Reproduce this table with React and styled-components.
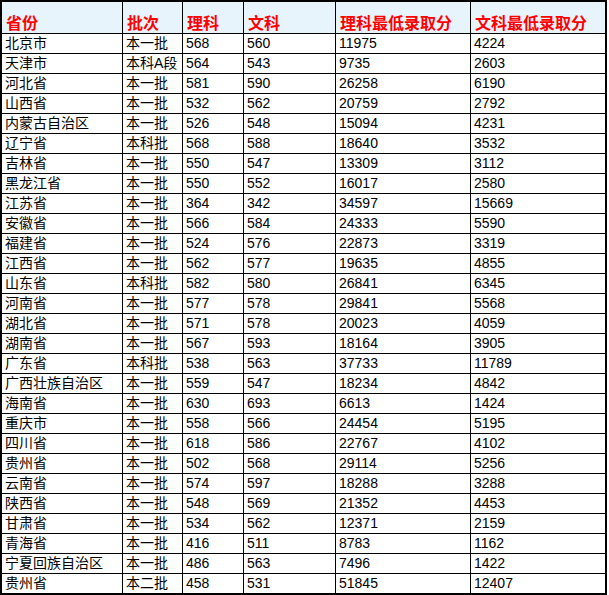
import React from "react";
import styled, { createGlobalStyle } from "styled-components";

const Global = createGlobalStyle`
  html, body { margin: 0; padding: 0; background: #ffffff; }
  body { font-family: "Liberation Sans", "Noto Sans CJK SC", sans-serif; }
`;

const Table = styled.div`
  display: grid;
  grid-template-columns: 120px 59px 60px 91px 134px 134px;
  grid-auto-rows: 19px;
  grid-template-rows: 31px;
  gap: 1px;
  width: max-content;
  background: #000000;
  border: 2px solid #000000;
`;

const HeadCell = styled.div`
  background: #e8f4fc;
  color: #ff0000;
  font-family: "Noto Sans CJK SC", sans-serif;
  font-weight: 700;
  font-size: 16px;
  line-height: 20px;
  padding: 10px 0 0 4px;
  white-space: nowrap;
  overflow: hidden;
`;

const Cell = styled.div`
  background: #ffffff;
  color: #000000;
  font-size: 14px;
  line-height: 19px;
  padding-left: 3px;
  white-space: nowrap;
  overflow: hidden;
`;

const headers = ["省份", "批次", "理科", "文科", "理科最低录取分", "文科最低录取分"];

const rows = [
  ["北京市", "本一批", "568", "560", "11975", "4224"],
  ["天津市", "本科A段", "564", "543", "9735", "2603"],
  ["河北省", "本一批", "581", "590", "26258", "6190"],
  ["山西省", "本一批", "532", "562", "20759", "2792"],
  ["内蒙古自治区", "本一批", "526", "548", "15094", "4231"],
  ["辽宁省", "本科批", "568", "588", "18640", "3532"],
  ["吉林省", "本一批", "550", "547", "13309", "3112"],
  ["黑龙江省", "本一批", "550", "552", "16017", "2580"],
  ["江苏省", "本一批", "364", "342", "34597", "15669"],
  ["安徽省", "本一批", "566", "584", "24333", "5590"],
  ["福建省", "本一批", "524", "576", "22873", "3319"],
  ["江西省", "本一批", "562", "577", "19635", "4855"],
  ["山东省", "本科批", "582", "580", "26841", "6345"],
  ["河南省", "本一批", "577", "578", "29841", "5568"],
  ["湖北省", "本一批", "571", "578", "20023", "4059"],
  ["湖南省", "本一批", "567", "593", "18164", "3905"],
  ["广东省", "本科批", "538", "563", "37733", "11789"],
  ["广西壮族自治区", "本一批", "559", "547", "18234", "4842"],
  ["海南省", "本一批", "630", "693", "6613", "1424"],
  ["重庆市", "本一批", "558", "566", "24454", "5195"],
  ["四川省", "本一批", "618", "586", "22767", "4102"],
  ["贵州省", "本一批", "502", "568", "29114", "5256"],
  ["云南省", "本一批", "574", "597", "18288", "3288"],
  ["陕西省", "本一批", "548", "569", "21352", "4453"],
  ["甘肃省", "本一批", "534", "562", "12371", "2159"],
  ["青海省", "本一批", "416", "511", "8783", "1162"],
  ["宁夏回族自治区", "本一批", "486", "563", "7496", "1422"],
  ["贵州省", "本二批", "458", "531", "51845", "12407"],
];

export default function App() {
  return (
    <>
      <Global />
      <Table>
        {headers.map((h) => (
          <HeadCell key={h}>{h}</HeadCell>
        ))}
        {rows.map((r, i) =>
          r.map((c, j) => <Cell key={i + "-" + j}>{c}</Cell>)
        )}
      </Table>
    </>
  );
}
